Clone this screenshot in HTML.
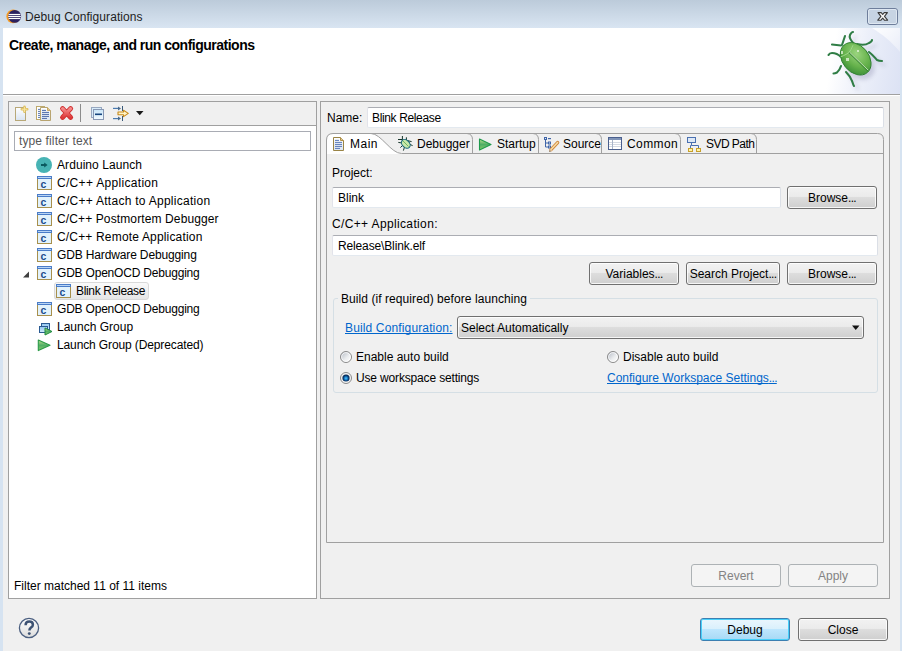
<!DOCTYPE html>
<html><head><meta charset="utf-8">
<style>
*{box-sizing:border-box}
html,body{margin:0;padding:0}
body{width:902px;height:651px;overflow:hidden;position:relative;background:#f0f0f0;font-family:"Liberation Sans",sans-serif;font-size:12px;color:#000}
.a{position:absolute}
.t{position:absolute;white-space:nowrap;line-height:15px;font-size:12px}
.btn{position:absolute;height:23px;border:1px solid #707070;border-radius:3px;background:linear-gradient(#f2f2f2 0,#ebebeb 45%,#dddddd 50%,#cfcfcf 100%);box-shadow:inset 0 0 0 1px rgba(255,255,255,.8);text-align:center;line-height:22px;font-size:12px;white-space:nowrap}
.el{letter-spacing:-.7px}
.t{text-decoration-skip-ink:none}
.dis{border-color:#adb2b5;background:#f4f4f4;color:#838383;box-shadow:none}
.fld{position:absolute;background:#fff;border:1px solid;border-color:#abadb3 #dbdfe6 #e3e9ef #e2e3ea;border-radius:2px}
</style></head>
<body>
<!-- title bar -->
<div class="a" style="left:0;top:0;width:902px;height:28px;background:linear-gradient(#bccbda,#d9e5f2)"></div>
<div class="a" style="left:0;top:28px;width:3px;height:623px;background:#d6e3f1"></div>
<div class="a" style="left:900px;top:28px;width:2px;height:623px;background:#d6e3f1"></div>
<div class="t" style="left:25px;top:10px;color:#1e1e1e;letter-spacing:.08px">Debug Configurations</div>

<!-- header -->
<div class="a" style="left:3px;top:28px;width:897px;height:66px;background:#fff"></div>
<div class="a" style="left:3px;top:94px;width:897px;height:1px;background:#a0a0a0"></div>
<div class="a" style="left:3px;top:95px;width:897px;height:1px;background:#fff"></div>
<div class="a" style="left:812px;top:28px;width:88px;height:66px;background:linear-gradient(100deg,rgba(222,228,245,0) 25%,rgba(222,228,245,.6) 60%,#dce2f4 100%)"></div>
<svg class="a" style="left:812px;top:28px" width="88" height="66"><defs><linearGradient id="gSw" x1="0" y1="0" x2="1" y2="1"><stop offset="0" stop-color="#fff" stop-opacity=".9"/><stop offset="1" stop-color="#fff" stop-opacity=".3"/></linearGradient></defs><path d="M60 0 C70 6 80 14 88 24 V0 Z" fill="url(#gSw)"/></svg>
<div class="t" style="left:9px;top:38px;font-size:14px;font-weight:bold;letter-spacing:-.5px">Create, manage, and run configurations</div>

<!-- left panel -->
<div class="a" style="left:8px;top:101px;width:309px;height:498px;border:1px solid #a0a0a0;background:#fff"></div>
<div class="a" style="left:9px;top:102px;width:307px;height:23px;background:#f0f0f0"></div>
<div class="a" style="left:9px;top:125px;width:307px;height:1px;background:#a0a0a0"></div>
<div class="a" style="left:80px;top:104px;width:1px;height:18px;background:#8c8c8c"></div>
<div class="a" style="left:14px;top:131px;width:297px;height:20px;border:1px solid #a9acb4;background:#fff"></div>
<div class="t" style="left:19px;top:134px;color:#575757;letter-spacing:.12px">type filter text</div>

<div class="t" style="left:57px;top:158px;letter-spacing:.07px">Arduino Launch</div>
<div class="t" style="left:57px;top:176px;letter-spacing:.31px">C/C++ Application</div>
<div class="t" style="left:57px;top:194px;letter-spacing:.27px">C/C++ Attach to Application</div>
<div class="t" style="left:57px;top:212px;letter-spacing:.12px">C/C++ Postmortem Debugger</div>
<div class="t" style="left:57px;top:230px;letter-spacing:.17px">C/C++ Remote Application</div>
<div class="t" style="left:57px;top:248px;letter-spacing:-.14px">GDB Hardware Debugging</div>
<div class="t" style="left:57px;top:266px;letter-spacing:-.2px">GDB OpenOCD Debugging</div>
<div class="a" style="left:54px;top:282px;width:95px;height:18px;border:1px solid #d9d9d9;border-radius:3px;background:linear-gradient(#fafafa,#e6e6e6)"></div>
<div class="t" style="left:76px;top:284px;letter-spacing:-.33px">Blink Release</div>
<div class="t" style="left:57px;top:302px;letter-spacing:-.2px">GDB OpenOCD Debugging</div>
<div class="t" style="left:57px;top:320px">Launch Group</div>
<div class="t" style="left:57px;top:338px;letter-spacing:-.12px">Launch Group (Deprecated)</div>

<div class="t" style="left:14px;top:579px">Filter matched 11 of 11 items</div>

<!-- right panel -->
<div class="a" style="left:320px;top:101px;width:570px;height:498px;border:1px solid #a0a0a0"></div>
<div class="t" style="left:327px;top:111px">Name:</div>
<div class="fld" style="left:367px;top:107px;width:517px;height:21px"></div>
<div class="t" style="left:372px;top:111px;letter-spacing:-.36px">Blink Release</div>

<!-- tab folder -->
<svg class="a" style="left:0;top:0" width="902" height="651">
  <path d="M327 154 L327 140 Q327 134 333 134 L371 134 C381 134 391 153.5 401.5 153.5 L401.5 154 Z" fill="#fff"/>
  <path d="M326.5 542.5 L326.5 140 Q326.5 133.5 333 133.5 L877.5 133.5 Q883.5 133.5 883.5 139.5 L883.5 542.5 Z" fill="none" stroke="#a0a0a0"/>
  <path d="M371 133.5 C381 133.5 391 153.5 401.5 153.5 L883 153.5" fill="none" stroke="#a0a0a0"/>
  <path d="M467 133.5 Q472.5 134 472.5 139.5 L472.5 153.5" fill="none" stroke="#a0a0a0"/>
  <path d="M533 133.5 Q538.5 134 538.5 139.5 L538.5 153.5" fill="none" stroke="#a0a0a0"/>
  <path d="M596 133.5 Q601.5 134 601.5 139.5 L601.5 153.5" fill="none" stroke="#a0a0a0"/>
  <path d="M675 133.5 Q680.5 134 680.5 139.5 L680.5 153.5" fill="none" stroke="#a0a0a0"/>
  <path d="M751 133.5 Q756.5 134 756.5 139.5 L756.5 153.5" fill="none" stroke="#a0a0a0"/>
</svg>
<div class="t" style="left:350px;top:137px;letter-spacing:.5px">Main</div>
<div class="t" style="left:417px;top:137px">Debugger</div>
<div class="t" style="left:497px;top:137px">Startup</div>
<div class="t" style="left:563px;top:137px">Source</div>
<div class="t" style="left:627px;top:137px;letter-spacing:.4px">Common</div>
<div class="t" style="left:706px;top:137px;letter-spacing:-.55px">SVD Path</div>

<div class="t" style="left:332px;top:166px">Project:</div>
<div class="fld" style="left:332px;top:187px;width:449px;height:21px"></div>
<div class="t" style="left:338px;top:191px">Blink</div>
<div class="btn" style="left:787px;top:186px;width:90px">Browse<span class="el">...</span></div>

<div class="t" style="left:332px;top:217px;letter-spacing:.36px">C/C++ Application:</div>
<div class="fld" style="left:332px;top:235px;width:546px;height:21px"></div>
<div class="t" style="left:338px;top:239px;letter-spacing:-.14px">Release\Blink.elf</div>
<div class="btn" style="left:589px;top:262px;width:90px">Variables<span class="el">...</span></div>
<div class="btn" style="left:686px;top:262px;width:94px">Search Project<span class="el">...</span></div>
<div class="btn" style="left:787px;top:262px;width:90px">Browse<span class="el">...</span></div>

<!-- group -->
<div class="a" style="left:333px;top:298px;width:545px;height:95px;border:1px solid #d5dfe5;border-radius:3px"></div>
<div class="a" style="left:338px;top:292px;width:192px;height:12px;background:#f0f0f0"></div>
<div class="t" style="left:341px;top:292px;letter-spacing:.07px">Build (if required) before launching</div>
<div class="t" style="left:345px;top:321px;color:#0066cc;text-decoration:underline;letter-spacing:.14px">Build Configuration:</div>
<div class="btn" style="left:457px;top:316px;width:407px;text-align:left;padding-left:3px">Select Automatically</div>
<div class="t" style="left:356px;top:350px">Enable auto build</div>
<div class="t" style="left:356px;top:371px;letter-spacing:-.16px">Use workspace settings</div>
<div class="t" style="left:623px;top:350px">Disable auto build</div>
<div class="t" style="left:607px;top:371px;color:#0066cc;text-decoration:underline">Configure Workspace Settings<span class="el">...</span></div>

<div class="btn dis" style="left:691px;top:564px;width:90px">Revert</div>
<div class="btn dis" style="left:788px;top:564px;width:90px">Apply</div>

<div class="btn" style="left:700px;top:618px;width:90px;border-color:#3c7fb1;background:linear-gradient(#eaf6fd 0,#d9f0fc 50%,#bee6fd 50%,#a7d9f5 100%);box-shadow:inset 0 0 0 1px #48d0fa">Debug</div>
<div class="btn" style="left:798px;top:618px;width:90px">Close</div>

<svg class="a" style="left:0;top:0" width="902" height="651">
<defs>
  <linearGradient id="gPage" x1="0" y1="0" x2="0" y2="1"><stop offset="0" stop-color="#ffffff"/><stop offset="1" stop-color="#d9e4f2"/></linearGradient>
  <linearGradient id="gRed" x1="0" y1="0" x2="0" y2="1"><stop offset="0" stop-color="#f58a8a"/><stop offset="1" stop-color="#dd3a3a"/></linearGradient>
  <linearGradient id="gGreen" x1="0" y1="0" x2="0" y2="1"><stop offset="0" stop-color="#c4e08e"/><stop offset=".5" stop-color="#4fae66"/><stop offset="1" stop-color="#8ccc6a"/></linearGradient>
  <linearGradient id="gWin" x1="0" y1="0" x2="0" y2="1"><stop offset="0" stop-color="#8ec4ee"/><stop offset="1" stop-color="#d4ecfc"/></linearGradient>
  <linearGradient id="gCol" x1="0" y1="0" x2="0" y2="1"><stop offset="0" stop-color="#c9e5f8"/><stop offset="1" stop-color="#f2faff"/></linearGradient>
  <radialGradient id="gBug" cx=".4" cy=".35" r=".7"><stop offset="0" stop-color="#a8dc7c"/><stop offset=".55" stop-color="#5cb244"/><stop offset="1" stop-color="#2f8a30"/></radialGradient>
  <radialGradient id="gShadow" cx=".5" cy=".5" r=".5"><stop offset="0" stop-color="#000" stop-opacity=".18"/><stop offset="1" stop-color="#000" stop-opacity="0"/></radialGradient>
  <linearGradient id="gRadio" x1=".15" y1=".15" x2=".85" y2=".85"><stop offset="0" stop-color="#bfc4cc"/><stop offset=".6" stop-color="#eceef0"/><stop offset="1" stop-color="#fafafa"/></linearGradient>
  <radialGradient id="gDot" cx=".5" cy=".55" r=".55"><stop offset="0" stop-color="#58c4f6"/><stop offset=".35" stop-color="#1a86d0"/><stop offset=".65" stop-color="#0a3f78"/><stop offset="1" stop-color="#061f40"/></radialGradient>
  <linearGradient id="gHelp" x1="0" y1="0" x2="0" y2="1"><stop offset="0" stop-color="#ffffff"/><stop offset="1" stop-color="#dcdcdc"/></linearGradient>
  <clipPath id="cEcl"><circle cx="14.5" cy="16.4" r="6.3"/></clipPath>
</defs>

<!-- eclipse title icon -->
<circle cx="13.2" cy="16.4" r="6.8" fill="#f59a22"/>
<circle cx="14.7" cy="16.4" r="6.4" fill="#2b2160"/>
<g clip-path="url(#cEcl)" fill="#fff"><rect x="8" y="13.9" width="14" height="1.2"/><rect x="8" y="15.9" width="14" height="1.2"/><rect x="8" y="17.9" width="14" height="1.2"/></g>

<!-- close button -->
<rect x="867.5" y="8.5" width="30" height="16" rx="2.5" fill="#c7d4e3" stroke="#6e7e9b"/>
<rect x="868.5" y="9.5" width="28" height="14" rx="1.5" fill="none" stroke="#e4ebf4" stroke-opacity=".8"/>
<path d="M878 12.6 H881.2 L882.7 14.5 L884.2 12.6 H887.4 L884.5 16.4 L887.6 20.2 H884.4 L882.7 18.2 L881 20.2 H877.8 L880.9 16.4 Z" fill="#f5f5f5" stroke="#3a3a3a" stroke-width="1.1" stroke-linejoin="round"/>

<!-- toolbar: new -->
<rect x="15.5" y="107.5" width="10" height="13" fill="url(#gPage)" stroke="#b8a878"/>
<path d="M24.5 106.8 V111.8 M21.8 109.3 H27.2" stroke="#e0c060" stroke-width="2.6" stroke-linecap="round"/>
<path d="M24.5 107.2 V111.4 M22.2 109.3 H26.8" stroke="#f6e4a0" stroke-width="1.1" stroke-linecap="round"/>
<!-- toolbar: duplicate -->
<rect x="36.5" y="106.5" width="8" height="13" fill="#fff" stroke="#bca86c"/>
<path d="M38 109.4h3M38 111.4h3M38 113.4h3M38 115.4h3M38 117.4h3" stroke="#5c78b0" stroke-width="1"/>
<path d="M40.5 107.5 H47.5 L50.5 110.5 V120.5 H40.5 Z" fill="url(#gPage)" stroke="#b8a470"/>
<path d="M47.5 107.5 V110.5 H50.5" fill="#e0c890" stroke="#c8a860"/>
<path d="M42 110.4h4M42 112.4h7M42 114.4h7M42 116.4h7M42 118.4h5" stroke="#4a68a8" stroke-width="1"/>
<!-- toolbar: delete -->
<path d="M62.6 108.6 L70.6 117.4 M70.6 108.6 L62.6 117.4" stroke="#cf2c2c" stroke-width="5" stroke-linecap="round"/>
<path d="M62.6 108.6 L70.6 117.4 M70.6 108.6 L62.6 117.4" stroke="url(#gRed)" stroke-width="3.2" stroke-linecap="round"/>
<!-- toolbar: collapse -->
<rect x="91.5" y="107.5" width="10" height="10" fill="#d8ecfa" stroke="#98a8c0"/>
<rect x="93.5" y="109.5" width="10" height="10" fill="url(#gCol)" stroke="#8898b4"/>
<rect x="95" y="113.5" width="7" height="1.6" fill="#15457e"/>
<!-- toolbar: filter/link -->
<path d="M113 108.4 H119" stroke="#4a7ab0" stroke-width="1.2"/><path d="M118 106.4 L121 108.4 L118 110.4 Z" fill="#4a6a8a"/>
<path d="M122.5 106 V111" stroke="#3a5a7a" stroke-width="1"/>
<path d="M113 118.6 H119" stroke="#4a7ab0" stroke-width="1.2"/><path d="M118 116.6 L121 118.6 L118 120.6 Z" fill="#4a6a8a"/>
<path d="M122.5 116 V121" stroke="#3a5a7a" stroke-width="1"/>
<path d="M118 112 H123.5 V110.2 L128.3 113.4 L123.5 116.6 V114.8 H118 Z" fill="#fff4c8" stroke="#c88a1a" stroke-width="1.1" stroke-linejoin="round"/>
<path d="M136 111 H143.5 L139.75 115.2 Z" fill="#1a1a1a"/>

<!-- tree: arduino -->
<circle cx="44" cy="165" r="8" fill="#47b3b4"/>
<path d="M41 165 H45" stroke="#0b5a60" stroke-width="2"/><path d="M44.2 162.4 L47.6 165 L44.2 167.6 Z" fill="#0b5a60"/>
<g transform="translate(37,176)"><rect x=".5" y=".5" width="14" height="13" fill="#e2f2fc" stroke="#a8904c"/><rect x="0" y="0" width="15" height="3" fill="#4a7cc8"/><rect x="1" y="1" width="13" height="1" fill="#b8d4f4"/><text x="3.6" y="11.6" font-family="Liberation Sans" font-weight="bold" font-size="10.5" fill="#1c4c8c">c</text></g>
<g transform="translate(37,194)"><rect x=".5" y=".5" width="14" height="13" fill="#e2f2fc" stroke="#a8904c"/><rect x="0" y="0" width="15" height="3" fill="#4a7cc8"/><rect x="1" y="1" width="13" height="1" fill="#b8d4f4"/><text x="3.6" y="11.6" font-family="Liberation Sans" font-weight="bold" font-size="10.5" fill="#1c4c8c">c</text></g>
<g transform="translate(37,212)"><rect x=".5" y=".5" width="14" height="13" fill="#e2f2fc" stroke="#a8904c"/><rect x="0" y="0" width="15" height="3" fill="#4a7cc8"/><rect x="1" y="1" width="13" height="1" fill="#b8d4f4"/><text x="3.6" y="11.6" font-family="Liberation Sans" font-weight="bold" font-size="10.5" fill="#1c4c8c">c</text></g>
<g transform="translate(37,230)"><rect x=".5" y=".5" width="14" height="13" fill="#e2f2fc" stroke="#a8904c"/><rect x="0" y="0" width="15" height="3" fill="#4a7cc8"/><rect x="1" y="1" width="13" height="1" fill="#b8d4f4"/><text x="3.6" y="11.6" font-family="Liberation Sans" font-weight="bold" font-size="10.5" fill="#1c4c8c">c</text></g>
<g transform="translate(37,248)"><rect x=".5" y=".5" width="14" height="13" fill="#e2f2fc" stroke="#a8904c"/><rect x="0" y="0" width="15" height="3" fill="#4a7cc8"/><rect x="1" y="1" width="13" height="1" fill="#b8d4f4"/><text x="3.6" y="11.6" font-family="Liberation Sans" font-weight="bold" font-size="10.5" fill="#1c4c8c">c</text></g>
<g transform="translate(37,266)"><rect x=".5" y=".5" width="14" height="13" fill="#e2f2fc" stroke="#a8904c"/><rect x="0" y="0" width="15" height="3" fill="#4a7cc8"/><rect x="1" y="1" width="13" height="1" fill="#b8d4f4"/><text x="3.6" y="11.6" font-family="Liberation Sans" font-weight="bold" font-size="10.5" fill="#1c4c8c">c</text></g>
<g transform="translate(37,302)"><rect x=".5" y=".5" width="14" height="13" fill="#e2f2fc" stroke="#a8904c"/><rect x="0" y="0" width="15" height="3" fill="#4a7cc8"/><rect x="1" y="1" width="13" height="1" fill="#b8d4f4"/><text x="3.6" y="11.6" font-family="Liberation Sans" font-weight="bold" font-size="10.5" fill="#1c4c8c">c</text></g>
<g transform="translate(56,284)"><rect x=".5" y=".5" width="14" height="13" fill="#e2f2fc" stroke="#a8904c"/><rect x="0" y="0" width="15" height="3" fill="#4a7cc8"/><rect x="1" y="1" width="13" height="1" fill="#b8d4f4"/><text x="3.6" y="11.6" font-family="Liberation Sans" font-weight="bold" font-size="10.5" fill="#1c4c8c">c</text></g>
<path d="M29 271.5 V277.5 H23 Z" fill="#404040"/>
<!-- launch group -->
<rect x="41.5" y="323.5" width="8" height="6" fill="url(#gWin)" stroke="#2a5a92"/>
<rect x="39.5" y="326.5" width="8" height="6" fill="url(#gWin)" stroke="#2a5a92"/>
<path d="M45 328 L52 331.5 L45 335 Z" fill="url(#gGreen)" stroke="#1f8a40" stroke-width="1" stroke-linejoin="round"/>
<path d="M38.3 340 L50 345.3 L38.3 350.6 Z" fill="url(#gGreen)" stroke="#2a9a48" stroke-width="1.1" stroke-linejoin="round"/>

<!-- tab icons: main doc -->
<path d="M333.5 137.5 H340.5 L343.5 140.5 V150.5 H333.5 Z" fill="url(#gPage)" stroke="#9a8446"/>
<path d="M340.5 137.5 V140.5 H343.5" fill="#e0c890" stroke="#b09048"/>
<path d="M335 140.4h4M335 142.4h7M335 144.4h7M335 146.4h7M335 148.4h5" stroke="#5a78b8" stroke-width="1"/>
<!-- debugger bug -->
<g stroke="#17352a" stroke-width="1">
<path d="M402.4 136 V141 M398 139.5 H402 M406.4 137.3 V141 M407 140.5 L411.6 141.6 M398.3 142.4 L402 143 M409 144 L412.6 145.6 M402.5 145.5 L400.4 147.6 M404.5 147 L403.4 150.6"/>
</g>
<ellipse cx="405.8" cy="143.8" rx="5" ry="3.6" transform="rotate(45 405.8 143.8)" fill="#c8e8aa" stroke="#1a6a7c" stroke-width="1.1"/>
<path d="M403 141 L408.5 146.5" stroke="#5aa84a" stroke-width=".8"/>
<!-- startup -->
<path d="M479.5 139 L491 144.4 L479.5 150 Z" fill="url(#gGreen)" stroke="#1f9a4c" stroke-width="1.1" stroke-linejoin="round"/>
<!-- source -->
<g fill="#3f65a8"><rect x="544" y="137" width="3" height="3"/><rect x="548" y="138" width="3" height="1.2"/><rect x="548" y="141.5" width="3" height="3"/><rect x="548" y="145.5" width="3" height="3"/></g>
<path d="M545.5 140 V147 H548 M545.5 143 H548" fill="none" stroke="#3f65a8" stroke-width="1"/>
<path d="M551 149.6 L557.6 142.6" stroke="#d08838" stroke-width="3.4" stroke-linecap="round"/>
<path d="M551 149.6 L557.6 142.6" stroke="#f8dca8" stroke-width="1.5" stroke-linecap="round"/>
<path d="M549.2 151.8 L550.2 148.6 L552.2 150.6 Z" fill="#e8c898"/>
<path d="M549.2 151.8 L549.8 150.2 L550.8 151.2 Z" fill="#402818"/>
<g fill="#dfe8f6"><rect x="545" y="138" width="1" height="1"/><rect x="549" y="142.5" width="1" height="1"/><rect x="549" y="146.5" width="1" height="1"/></g>
<!-- common -->
<rect x="608.5" y="137.5" width="13" height="12" fill="#fff" stroke="#4a5f8e"/>
<rect x="609" y="138" width="12" height="2" fill="#7f93b6"/>
<path d="M609 142.5h12M609 144.5h12M609 146.5h12" stroke="#d4d9e2" stroke-width="1"/>
<path d="M612.5 140 V149" stroke="#a8b4c8" stroke-width="1"/>
<!-- svd path -->
<rect x="687.5" y="137.5" width="8" height="5" fill="#dde8f6" stroke="#4a70b0"/>
<path d="M691.5 143 V145.5 H690.5 M691.5 145.5 H698.5 V148 M690.5 145.5 V148" fill="none" stroke="#4a70b0" stroke-width="1"/>
<rect x="688.5" y="148.5" width="4" height="3" fill="#fff2a8" stroke="#c8a02a"/>
<rect x="696.5" y="148.5" width="4" height="3" fill="#fff2a8" stroke="#c8a02a"/>

<!-- radios -->
<circle cx="346" cy="357" r="5.5" fill="url(#gRadio)" stroke="#8a8a8a"/>
<circle cx="346" cy="357" r="4.4" fill="none" stroke="#fff" stroke-opacity=".7"/>
<circle cx="346" cy="378" r="5.5" fill="#f4f4f4" stroke="#8a8a8a"/>
<circle cx="346" cy="378" r="3.6" fill="url(#gDot)"/>
<circle cx="613" cy="357" r="5.5" fill="url(#gRadio)" stroke="#8a8a8a"/>
<circle cx="613" cy="357" r="4.4" fill="none" stroke="#fff" stroke-opacity=".7"/>
<!-- combo arrow -->
<path d="M852 325.5 H859.5 L855.75 330 Z" fill="#111"/>

<!-- help -->
<circle cx="29" cy="628" r="9.6" fill="url(#gHelp)" stroke="#4b5f80" stroke-width="1.3"/>
<path d="M25.6 625.2 C25.6 622.6 27.2 621.6 29.2 621.6 C31.6 621.6 32.9 623 32.9 624.7 C32.9 626.4 31.6 627.1 30.6 627.9 C29.7 628.6 29.4 629.2 29.4 630.6" fill="none" stroke="#3d5273" stroke-width="2.5"/><circle cx="29.3" cy="633.6" r="1.45" fill="#3d5273"/>

<!-- bug -->
<defs>
<radialGradient id="gBug2" cx=".4" cy=".35" r=".75"><stop offset="0" stop-color="#9ad47e"/><stop offset=".55" stop-color="#66b24c"/><stop offset="1" stop-color="#358a34"/></radialGradient>
<filter id="fBlur" x="-50%" y="-50%" width="200%" height="200%"><feGaussianBlur stdDeviation="2"/></filter>
</defs>
<g filter="url(#fBlur)" opacity=".22" transform="translate(4,4)">
<ellipse cx="856" cy="61" rx="16" ry="13.5" transform="rotate(45 856 61)" fill="#505080"/>
<g stroke="#505080" stroke-width="2.2" fill="none">
<path d="M855 45 C851 41 849 37 850 35 C851 33 852 32 853 32"/>
<path d="M857 44 C861 45 866 45 869 43 C871 42 872 41 872 40"/>
<path d="M869 52 C873 55 875 58 877 60 C879 61 881 61 882 61"/>
<path d="M846 72 C849 75 851 78 852 81 C853 83 853 85 854 86"/>
</g></g>
<g stroke="#2f7d45" stroke-width="2.1" fill="none" stroke-linecap="round">
<path d="M842 45 L845 36"/>
<path d="M841 45.5 L832 44.5"/>
<path d="M855 45 C851 41 849 37 850 35 C851 33 852 32 853 32"/>
<path d="M857 44 C861 45 866 45 869 43 C871 42 872 41 872 40"/>
<path d="M841 57 C838 54 836 53 832 53 C830 53 829 54 828.5 55"/>
<path d="M869 52 C873 55 875 58 877 60 C879 61 881 61 882 61"/>
<path d="M841 66 C840 69 839 71 837 72.5 C835 73.5 834 73.5 833.5 73.5"/>
<path d="M846 72 C849 75 851 78 852 81 C853 83 853 85 854 86"/>
</g>
<ellipse cx="855.7" cy="58.8" rx="18" ry="13.2" transform="rotate(50 855.7 58.8)" fill="url(#gBug2)" stroke="#2f8030" stroke-width=".9"/>
<path d="M840.5 57 C845 55 848 53.5 849.2 52.3 C850.5 50.8 851.5 48.5 853 45.2" fill="none" stroke="#9fd88a" stroke-width="1"/>
<path d="M849.2 52.6 L868 70.8" stroke="#2a7a2a" stroke-width="1.6" stroke-opacity=".7"/>
<path d="M849.6 52.2 L868.2 70.2" stroke="#dff3d2" stroke-width=".8"/>
<g fill="#e8f6e0" opacity=".75"><rect x="841" y="51" width="2" height="3"/><rect x="846" y="58" width="3" height="3"/><rect x="857" y="50" width="2" height="2"/></g>
</svg>
</body></html>
